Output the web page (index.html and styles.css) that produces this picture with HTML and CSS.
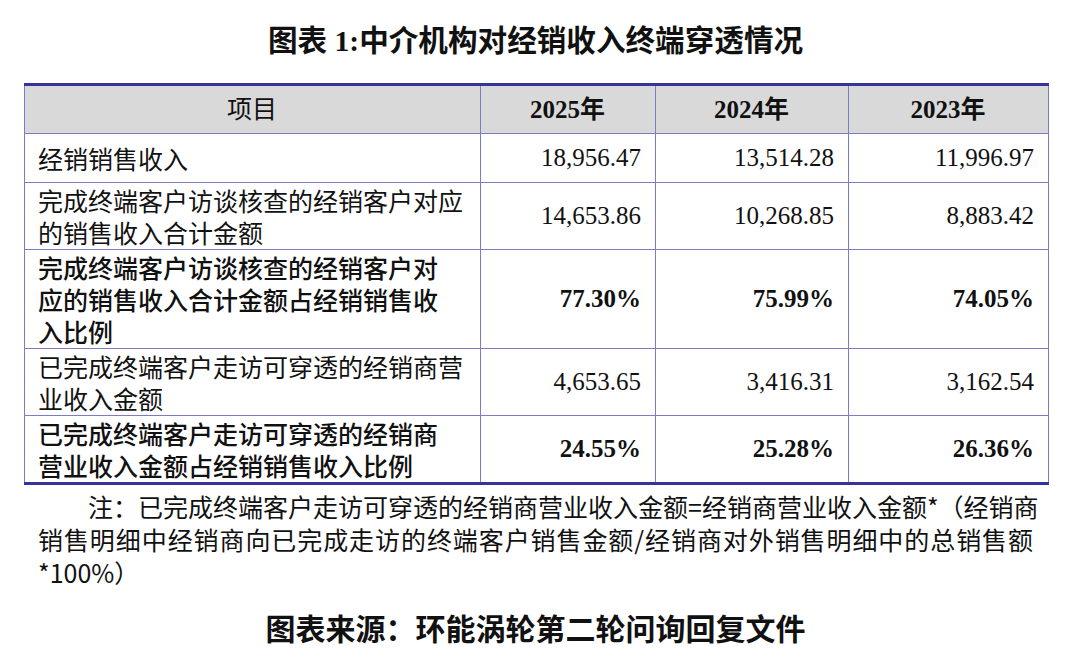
FILE: index.html
```
<!DOCTYPE html>
<html lang="zh-CN">
<head>
<meta charset="utf-8">
<title>图表 1</title>
<link rel="stylesheet" href="styles.css">
</head>
<body>
<div class="page">
  <h1 class="title">图表 1:中介机构对经销收入终端穿透情况</h1>
  <table class="data">
    <colgroup>
      <col class="c-item">
      <col class="c-y1">
      <col class="c-y2">
      <col class="c-y3">
    </colgroup>
    <thead>
      <tr class="head">
        <th class="h-item">项目</th>
        <th class="h-year">2025年</th>
        <th class="h-year">2024年</th>
        <th class="h-year">2023年</th>
      </tr>
    </thead>
    <tbody>
      <tr class="single">
        <td class="label">经销销售收入</td>
        <td class="num">18,956.47</td>
        <td class="num">13,514.28</td>
        <td class="num">11,996.97</td>
      </tr>
      <tr>
        <td class="label">完成终端客户访谈核查的经销客户对应<br>的销售收入合计金额</td>
        <td class="num">14,653.86</td>
        <td class="num">10,268.85</td>
        <td class="num">8,883.42</td>
      </tr>
      <tr class="strong">
        <td class="label">完成终端客户访谈核查的经销客户对<br>应的销售收入合计金额占经销销售收<br>入比例</td>
        <td class="num">77.30%</td>
        <td class="num">75.99%</td>
        <td class="num">74.05%</td>
      </tr>
      <tr>
        <td class="label">已完成终端客户走访可穿透的经销商营<br>业收入金额</td>
        <td class="num">4,653.65</td>
        <td class="num">3,416.31</td>
        <td class="num">3,162.54</td>
      </tr>
      <tr class="strong last">
        <td class="label">已完成终端客户走访可穿透的经销商<br>营业收入金额占经销销售收入比例</td>
        <td class="num">24.55%</td>
        <td class="num">25.28%</td>
        <td class="num">26.36%</td>
      </tr>
    </tbody>
  </table>
  <div class="note">
    <p class="note-line first">注：已完成终端客户走访可穿透的经销商营业收入金额=经销商营业收入金额*（经销商</p>
    <p class="note-line">销售明细中经销商向已完成走访的终端客户销售金额/经销商对外销售明细中的总销售额</p>
    <p class="note-line end">*100%）</p>
  </div>
  <p class="source">图表来源：环能涡轮第二轮问询回复文件</p>
</div>
</body>
</html>
```

FILE: styles.css
```
html, body {
  margin: 0;
  padding: 0;
  background: #ffffff;
}

body {
  width: 1080px;
  height: 671px;
  overflow: hidden;
  color: #111111;
  font-family: "Liberation Serif", "Noto Sans CJK SC", serif;
}

.page {
  display: flex;
  flex-direction: column;
  align-items: stretch;
  padding-top: 21px;
}

.title {
  margin: 0 9px 0 0;
  font-size: 29.6px;
  line-height: 40px;
  font-weight: 700;
  text-align: center;
}

.data {
  margin: 22px 0 0 24px;
  width: 1024px;
  border-collapse: collapse;
  table-layout: fixed;
  font-size: 25px;
  line-height: 32px;
  border-top: 3px solid #34349a;
  border-bottom: 3px solid #34349a;
}

.c-item { width: 456px; }
.c-y1 { width: 175px; }
.c-y2 { width: 193px; }
.c-y3 { width: 200px; }

.data th,
.data td {
  border-left: 1px solid #7c7cc6;
  border-right: 1px solid #7c7cc6;
  border-bottom: 1px solid #7c7cc6;
  padding: 1px 14px 1px 13px;
  vertical-align: middle;
}

.data tr.last td {
  border-bottom: 3px solid #34349a;
}

.head th {
  background: #d9d9d9;
  padding-top: 8px;
  padding-bottom: 7px;
  text-align: center;
}

.h-item {
  font-weight: 400;
}

.h-year {
  font-weight: 700;
}

.single td {
  padding-top: 8px;
  padding-bottom: 8px;
}

.label {
  text-align: left;
  font-family: "Noto Sans CJK SC", sans-serif;
  font-weight: 400;
}

.num {
  text-align: right;
}

.strong td {
  font-weight: 700;
}

.strong .label {
  font-weight: 500;
}

.note {
  margin: 5px 0 0 38px;
  width: 995px;
  display: flex;
  flex-direction: column;
  font-family: "Noto Sans CJK SC", sans-serif;
  font-size: 25px;
  line-height: 33px;
}

.note-line {
  margin: 0;
  white-space: nowrap;
  text-align: justify;
  text-align-last: justify;
  text-justify: inter-character;
}

.note-line.first {
  text-indent: 50px;
}

.note-line.end {
  text-align: left;
  text-align-last: left;
}

.source {
  margin: 21px 9px 0 0;
  font-family: "Liberation Serif", "Noto Sans CJK SC", serif;
  font-size: 30px;
  line-height: 40px;
  font-weight: 700;
  text-align: center;
}
```
